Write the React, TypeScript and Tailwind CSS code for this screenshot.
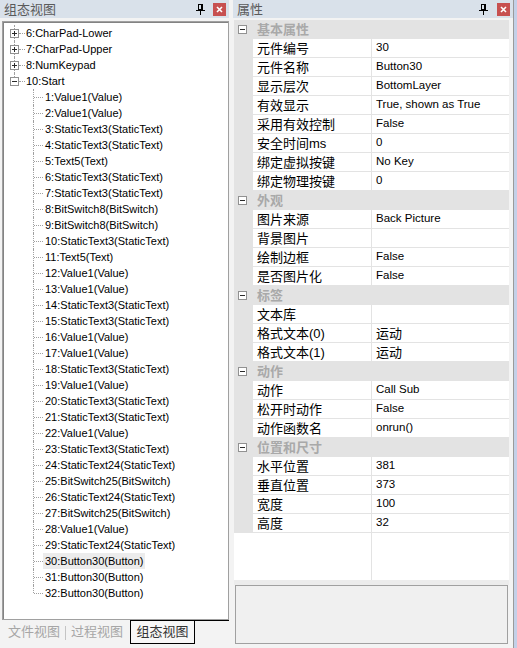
import React from "react";

const roots = [
  { label: "6:CharPad-Lower", open: false },
  { label: "7:CharPad-Upper", open: false },
  { label: "8:NumKeypad", open: false },
  { label: "10:Start", open: true },
];

const children = [
  "1:Value1(Value)",
  "2:Value1(Value)",
  "3:StaticText3(StaticText)",
  "4:StaticText3(StaticText)",
  "5:Text5(Text)",
  "6:StaticText3(StaticText)",
  "7:StaticText3(StaticText)",
  "8:BitSwitch8(BitSwitch)",
  "9:BitSwitch8(BitSwitch)",
  "10:StaticText3(StaticText)",
  "11:Text5(Text)",
  "12:Value1(Value)",
  "13:Value1(Value)",
  "14:StaticText3(StaticText)",
  "15:StaticText3(StaticText)",
  "16:Value1(Value)",
  "17:Value1(Value)",
  "18:StaticText3(StaticText)",
  "19:Value1(Value)",
  "20:StaticText3(StaticText)",
  "21:StaticText3(StaticText)",
  "22:Value1(Value)",
  "23:StaticText3(StaticText)",
  "24:StaticText24(StaticText)",
  "25:BitSwitch25(BitSwitch)",
  "26:StaticText24(StaticText)",
  "27:BitSwitch25(BitSwitch)",
  "28:Value1(Value)",
  "29:StaticText24(StaticText)",
  "30:Button30(Button)",
  "31:Button30(Button)",
  "32:Button30(Button)",
];

const groups: { title: string; rows: [string, string][] }[] = [
  {
    title: "基本属性",
    rows: [
      ["元件编号", "30"],
      ["元件名称", "Button30"],
      ["显示层次", "BottomLayer"],
      ["有效显示", "True, shown as True"],
      ["采用有效控制", "False"],
      ["安全时间ms", "0"],
      ["绑定虚拟按键", "No Key"],
      ["绑定物理按键", "0"],
    ],
  },
  {
    title: "外观",
    rows: [
      ["图片来源", "Back Picture"],
      ["背景图片", ""],
      ["绘制边框", "False"],
      ["是否图片化", "False"],
    ],
  },
  {
    title: "标签",
    rows: [
      ["文本库", ""],
      ["格式文本(0)", "运动"],
      ["格式文本(1)", "运动"],
    ],
  },
  {
    title: "动作",
    rows: [
      ["动作", "Call Sub"],
      ["松开时动作", "False"],
      ["动作函数名", "onrun()"],
    ],
  },
  {
    title: "位置和尺寸",
    rows: [
      ["水平位置", "381"],
      ["垂直位置", "373"],
      ["宽度", "100"],
      ["高度", "32"],
    ],
  },
];

const font = "font-['Liberation_Sans','Noto_Sans_CJK_SC',sans-serif]";

function ExpandBox({ open }: { open: boolean }) {
  return (
    <span className="relative z-10 flex h-[9px] w-[9px] shrink-0 items-center justify-center border border-[#919191] bg-white">
      <span className="absolute h-px w-[5px] bg-[#2b2b2b]" />
      {!open && <span className="absolute h-[5px] w-px bg-[#2b2b2b]" />}
    </span>
  );
}

function Pin() {
  return (
    <svg width="9" height="11" viewBox="0 0 9 11" className="shrink-0">
      <rect x="2.5" y="0.5" width="4" height="5" fill="none" stroke="#000" />
      <rect x="5" y="0" width="2" height="6" fill="#000" />
      <rect x="0" y="6" width="9" height="1" fill="#000" />
      <rect x="4" y="7" width="1" height="4" fill="#000" />
    </svg>
  );
}

function CloseBtn() {
  return (
    <span className="flex h-[13px] w-[13px] items-center justify-center bg-[#c75050]">
      <svg width="7" height="7" viewBox="0 0 7 7">
        <path d="M1 1 L6 6 M6 1 L1 6" stroke="#fff" strokeWidth="1.6" />
      </svg>
    </span>
  );
}

function TitleBar({ title, pinGap }: { title: string; pinGap: string }) {
  return (
    <div className="flex h-[18px] shrink-0 items-center bg-[#d9e1ea] pl-[4px] pr-[3px]">
      <span className="text-[13px] leading-none text-[#5a5a5a]">{title}</span>
      <span className="flex-1" />
      <Pin />
      <span className={pinGap} />
      <CloseBtn />
    </div>
  );
}

function TreePanel() {
  return (
    <div className="flex w-[229px] shrink-0 flex-col">
      <TitleBar title="组态视图" pinGap="w-[8px]" />
      <div className="ml-[2px] mt-[3px] flex h-[599px] flex-col border border-[#a0a0a0] bg-white">
        <div className="flex flex-1 flex-col overflow-hidden border-l border-t border-[#838383] pt-[2px] text-[11px] text-black">
          {roots.map((r, i) => (
            <div key={r.label} className="relative flex h-[16px] items-center pl-[6px]">
              <span
                className={
                  i === roots.length - 1
                    ? "absolute left-[10px] top-0 h-[8px] border-l border-dotted border-[#a0a0a0]"
                    : "absolute left-[10px] top-0 h-[16px] border-l border-dotted border-[#a0a0a0]"
                }
              />
              <ExpandBox open={r.open} />
              <span className="h-0 w-[6px] border-t border-dotted border-[#a0a0a0]" />
              <span className="ml-[1px] whitespace-nowrap leading-none">{r.label}</span>
            </div>
          ))}
          {children.map((c, i) => (
            <div key={c} className="relative flex h-[16px] items-center pl-[39px]">
              <span
                className={
                  i === children.length - 1
                    ? "absolute left-[29px] top-0 h-[8px] border-l border-dotted border-[#a0a0a0]"
                    : "absolute left-[29px] top-0 h-[16px] border-l border-dotted border-[#a0a0a0]"
                }
              />
              <span className="absolute left-[30px] top-[8px] w-[9px] border-t border-dotted border-[#a0a0a0]" />
              <span
                className={
                  c === "30:Button30(Button)"
                    ? "flex h-[16px] items-center whitespace-nowrap bg-[#ececec] px-[2px] leading-none"
                    : "flex h-[16px] items-center whitespace-nowrap px-[2px] leading-none"
                }
              >
                {c}
              </span>
            </div>
          ))}
        </div>
      </div>
      <div className="flex h-[28px] items-start text-[13px]">
        <span className="flex h-[24px] items-center pl-[8px] text-[#a6a6a6]">文件视图</span>
        <span className="mx-[5px] mt-[6px] h-[14px] w-px bg-[#c4c4c4]" />
        <span className="flex h-[24px] items-center text-[#a6a6a6]">过程视图</span>
        <span className="ml-[7px] flex h-[24px] w-[65px] items-center justify-center border-x border-b border-t border-black bg-[#f7f7f7] text-[#333]">
          组态视图
        </span>
        <span className="h-px flex-1 bg-black" />
      </div>
    </div>
  );
}

function PropertyPanel() {
  return (
    <div className="flex w-[280px] shrink-0 flex-col">
      <TitleBar title="属性" pinGap="w-[9px]" />
      <div className="ml-[1px] mt-[2px] flex h-[560px] w-[275px] flex-col bg-white">
        {groups.map((g) => (
          <React.Fragment key={g.title}>
            <div className="flex h-[19px] items-center bg-[#e3e3e3]">
              <span className="ml-[4px] mr-[10px]">
                <ExpandBox open />
              </span>
              <span className="text-[13px] font-bold leading-none text-[#a9a9a9]">{g.title}</span>
            </div>
            {g.rows.map(([k, v]) => (
              <div key={k} className="flex h-[19px]">
                <span className="w-[19px] shrink-0 bg-[#e3e3e3]" />
                <span className="flex w-[118px] shrink-0 items-center border-b border-[#e3e3e3] pl-[4px] text-[13px] leading-none text-black">
                  {k}
                </span>
                <span
                  className={
                    /[\u4e00-\u9fff]/.test(v)
                      ? "flex flex-1 items-center border-b border-l border-[#e3e3e3] pl-[4px] text-[13px] leading-none text-black"
                      : "flex flex-1 items-center border-b border-l border-[#e3e3e3] pl-[4px] text-[11.5px] leading-none text-black"
                  }
                >
                  {v}
                </span>
              </div>
            ))}
          </React.Fragment>
        ))}
        <div className="flex flex-1">
          <span className="w-[137px] shrink-0" />
          <span className="border-l border-[#e3e3e3]" />
        </div>
      </div>
      <div className="ml-[1px] h-[5px] w-[275px] bg-[#ececec]" />
      <div className="ml-[2px] h-[59px] w-[273px] border border-[#a0a0a0] bg-[#f0f0f0]" />
    </div>
  );
}

export default function App() {
  return (
    <div className={`flex h-[648px] w-[517px] overflow-hidden bg-[#f3f3f3] ${font}`}>
      <TreePanel />
      <span className="w-[4px] shrink-0" />
      <PropertyPanel />
      <span className="w-[4px] shrink-0 border-l border-[#9a9a9a] bg-[#c3d0e8]" />
    </div>
  );
}
